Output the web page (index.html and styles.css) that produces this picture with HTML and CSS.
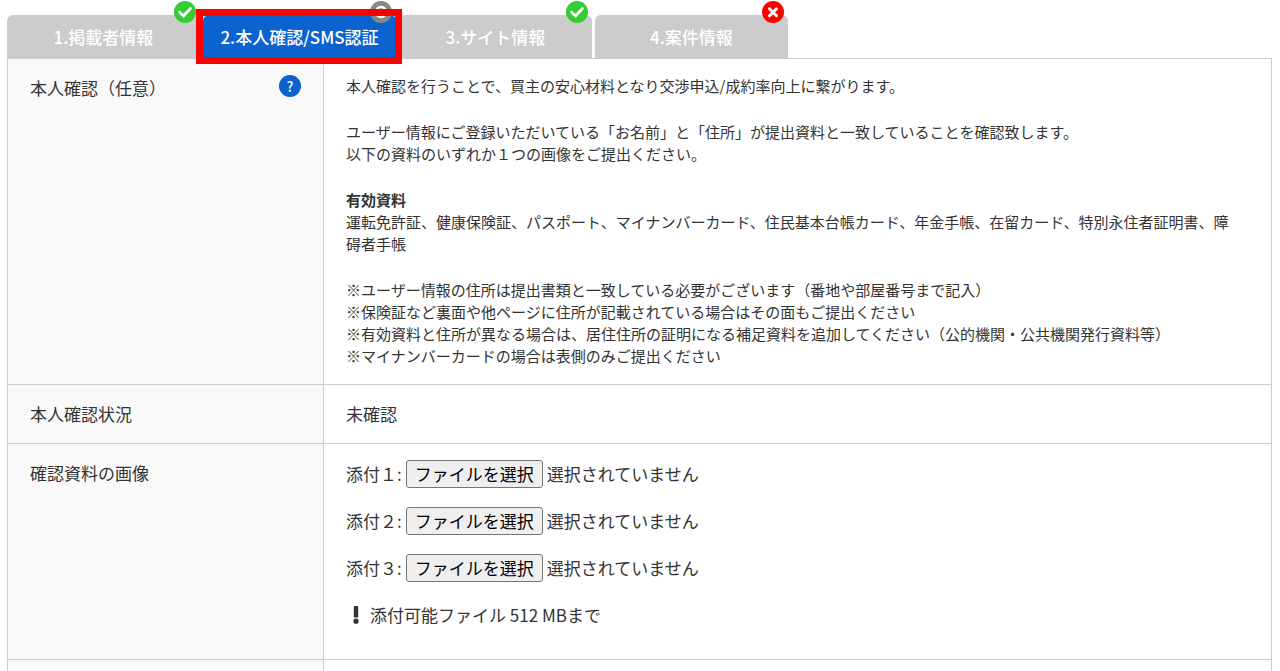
FILE: index.html
```
<!DOCTYPE html>
<html lang="ja">
  <head>
    <meta charset="utf-8">
    <meta name="viewport" content="width=device-width, initial-scale=1">
    <title>本人確認/SMS認証</title>
    <link rel="stylesheet" href="styles.css">
  </head>
  <body>
    <nav class="tabs">
      <a class="tab" href="#info">1.掲載者情報
        <svg class="badge" viewBox="0 0 22 22"><circle cx="11" cy="11" r="11" fill="#33cc33"/><path d="M5.500 11l4 4 7-7.500" fill="none" stroke="#fff" stroke-width="2.8" stroke-linecap="round"/></svg>
      </a>
      <a class="tab active" href="#identity">2.本人確認/SMS認証
        <svg class="badge" viewBox="0 0 22 22"><circle cx="11" cy="11" r="11" fill="#888"/><circle cx="11" cy="11" r="5" fill="none" stroke="#fff" stroke-width="2.4"/></svg>
      </a>
      <a class="tab" href="#site">3.サイト情報
        <svg class="badge" viewBox="0 0 22 22"><circle cx="11" cy="11" r="11" fill="#33cc33"/><path d="M5.500 11l4 4 7-7.500" fill="none" stroke="#fff" stroke-width="2.8" stroke-linecap="round"/></svg>
      </a>
      <a class="tab" href="#project">4.案件情報
        <svg class="badge" viewBox="0 0 22 22"><circle cx="11" cy="11" r="11" fill="#f00"/><path d="M7.500 7.800l7 7M14.500 7.800l-7 7" stroke="#fff" stroke-width="3" stroke-linecap="round"/></svg>
      </a>
    </nav>
    <table class="form" id="identity">
      <tr>
        <th>
          <div class="head">
            本人確認（任意）
            <button class="help" type="button" aria-label="ヘルプ">?</button>
          </div>
        </th>
        <td>
          <div class="guide">
            <p>本人確認を行うことで、買主の安心材料となり交渉申込/成約率向上に繋がります。</p>
            <p>ユーザー情報にご登録いただいている「お名前」と「住所」が提出資料と一致していることを確認致します。<br>
            以下の資料のいずれか１つの画像をご提出ください。</p>
            <p><strong>有効資料</strong><br>
            運転免許証、健康保険証、パスポート、マイナンバーカード、住民基本台帳カード、年金手帳、在留カード、特別永住者証明書、障碍者手帳</p>
            <p>※ユーザー情報の住所は提出書類と一致している必要がございます（番地や部屋番号まで記入）<br>
            ※保険証など裏面や他ページに住所が記載されている場合はその面もご提出ください<br>
            ※有効資料と住所が異なる場合は、居住住所の証明になる補足資料を追加してください（公的機関・公共機関発行資料等）<br>
            ※マイナンバーカードの場合は表側のみご提出ください</p>
          </div>
        </td>
      </tr>
      <tr>
        <th>本人確認状況</th>
        <td>未確認</td>
      </tr>
      <tr>
        <th>確認資料の画像</th>
        <td>
          <div class="files">
            <div class="file">
              <label for="pick1">添付１:</label>
              <button id="pick1" type="button" onclick="file1.click()">ファイルを選択</button>
              <span>選択されていません</span>
              <input id="file1" type="file" hidden>
            </div>
            <div class="file">
              <label for="pick2">添付２:</label>
              <button id="pick2" type="button" onclick="file2.click()">ファイルを選択</button>
              <span>選択されていません</span>
              <input id="file2" type="file" hidden>
            </div>
            <div class="file">
              <label for="pick3">添付３:</label>
              <button id="pick3" type="button" onclick="file3.click()">ファイルを選択</button>
              <span>選択されていません</span>
              <input id="file3" type="file" hidden>
            </div>
            <div class="file">
              <svg class="mark" viewBox="0 0 20 20"><rect x="7.800" y="1" width="4.400" height="11.500" rx=".8" fill="#333"/><circle cx="10" cy="16.200" r="2.600" fill="#333"/></svg>
              添付可能ファイル 512 MBまで
            </div>
          </div>
        </td>
      </tr>
      <tr class="next">
        <th></th>
        <td></td>
      </tr>
    </table>
  </body>
</html>
```
FILE: styles.css
```
* {
  box-sizing: border-box;
}
body {
  margin: 0;
  padding: 15px 8px 0 7px;
  font-family: "Noto Sans CJK JP", sans-serif;
  font-size: 17px;
  line-height: 26px;
  color: #333;
  background: #fff;
}
.tabs {
  display: flex;
  gap: 3px;
}
.tab {
  position: relative;
  width: 193px;
  height: 43px;
  padding-top: 9px;
  border-radius: 6px 6px 0 0;
  background: #ccc;
  color: #fff;
  font-weight: 500;
  text-align: center;
  text-decoration: none;
}
.badge {
  position: absolute;
  top: -14px;
  right: 4px;
  width: 22px;
  height: 22px;
}
.active {
  z-index: 1;
  background: #0a63cf;
}
/* red frame round the current step */
.active::after {
  content: "";
  position: absolute;
  inset: -6px -6px -6px -7px;
  border: 7px solid #f00;
}
.form {
  width: 100%;
  border-collapse: collapse;
  table-layout: fixed;
}
.form th,
.form td {
  padding: 16px 22px;
  border: 1px solid #ccc;
  font-weight: normal;
  text-align: left;
  vertical-align: top;
}
.form th {
  width: 25%;
  background: #f9f9f9;
}
.head {
  display: flex;
  justify-content: space-between;
}
.help {
  width: 22px;
  height: 22px;
  padding: 0;
  border: 0;
  border-radius: 50%;
  background: #0a63cf;
  color: #fff;
  font: 500 14px/22px "Noto Sans CJK JP", sans-serif;
}
.guide {
  padding: 0 10px 1px 0;
  font-size: 15px;
  line-height: 22px;
}
.guide p {
  margin: 0 0 24px;
}
.guide p:last-child {
  margin-bottom: 0;
}
.files {
  display: flex;
  flex-direction: column;
  gap: 19px;
  padding-bottom: 14px;
}
.file {
  display: flex;
  align-items: center;
  gap: 4px;
  height: 28px;
}
.file button {
  height: 28px;
  padding: 0 8px;
  border: 1px solid #767676;
  border-radius: 3px;
  background: #efefef;
  color: #000;
  font: 17px/26px "Noto Sans CJK JP", sans-serif;
}
.mark {
  width: 20px;
  height: 20px;
}
.form .next th,
.form .next td {
  height: 12px;
  padding: 0;
  border-bottom: 0;
}
```
